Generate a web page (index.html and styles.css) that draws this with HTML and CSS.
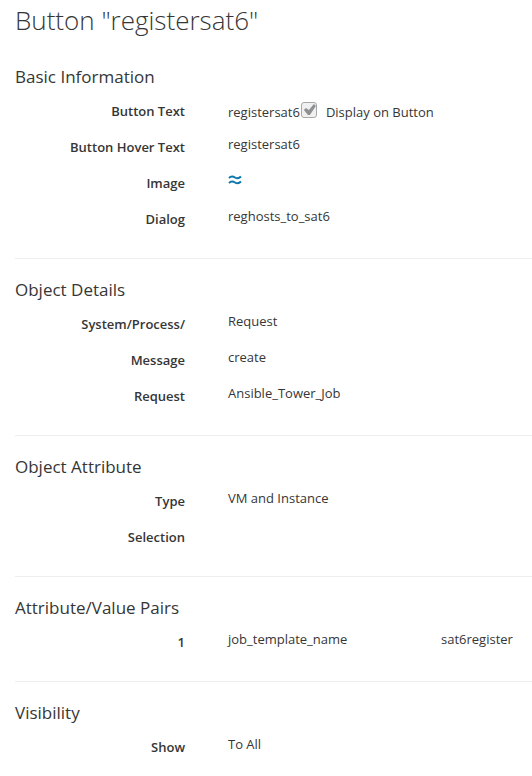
FILE: index.html
```html
<!DOCTYPE html>
<html lang="en">

<head>
    <meta charset="UTF-8">
    <meta name="viewport" content="width=device-width, initial-scale=1.0">
    <title>Button "registersat6"</title>
    <link rel="stylesheet" href="styles.css">
</head>

<body>
    <main>
        <h1>Button "registersat6"</h1>

        <section>
            <h3>Basic Information</h3>
            <div class="form-group">
                <div class="label">Button Text</div>
                <div class="value with-checkbox">
                    registersat6
                    <input type="checkbox" id="display" checked disabled>
                    <label for="display">Display on Button</label>
                </div>
            </div>
            <div class="form-group">
                <div class="label">Button Hover Text</div>
                <div class="value">registersat6</div>
            </div>
            <div class="form-group">
                <div class="label">Image</div>
                <div class="value">
                    <svg class="icon" viewBox="0 0 14 10" width="14" height="10">
                        <path d="M1 3C3 1 4.500 1 7 2.500S11 3.500 13 1.500M1 8C3 6 4.500 6 7 7.500S11 8.500 13 6.500" />
                    </svg>
                </div>
            </div>
            <div class="form-group">
                <div class="label">Dialog</div>
                <div class="value">reghosts_to_sat6</div>
            </div>
        </section>

        <section>
            <h3>Object Details</h3>
            <div class="form-group">
                <div class="label">System/Process/</div>
                <div class="value">Request</div>
            </div>
            <div class="form-group">
                <div class="label">Message</div>
                <div class="value">create</div>
            </div>
            <div class="form-group">
                <div class="label">Request</div>
                <div class="value">Ansible_Tower_Job</div>
            </div>
        </section>

        <section>
            <h3>Object Attribute</h3>
            <div class="form-group">
                <div class="label">Type</div>
                <div class="value">VM and Instance</div>
            </div>
            <div class="form-group">
                <div class="label">Selection</div>
                <div class="value"></div>
            </div>
        </section>

        <section>
            <h3>Attribute/Value Pairs</h3>
            <div class="form-group">
                <div class="label">1</div>
                <div class="value pair">
                    <span>job_template_name</span>
                    <span>sat6register</span>
                </div>
            </div>
        </section>

        <section>
            <h3>Visibility</h3>
            <div class="form-group">
                <div class="label">Show</div>
                <div class="value">To All</div>
            </div>
        </section>
    </main>
</body>

</html>
```
FILE: styles.css
```css
body {
    margin: 0;
    background-color: #fff;
    color: #363636;
    font-family: "Open Sans", Helvetica, Arial, sans-serif;
    font-size: 13px;
    line-height: 20px;
}

main {
    padding: 4px 0 0 15px;
}

h1 {
    margin: 0 0 30px;
    font-size: 26px;
    font-weight: 300;
    line-height: 32px;
}

h3 {
    margin: 0 0 10px;
    font-size: 17px;
    font-weight: 400;
    line-height: 22px;
}

section {
    padding-bottom: 16px;
    margin-bottom: 20px;
    border-bottom: 1px solid #eee;
}

section:last-child {
    margin-bottom: 0;
    padding-bottom: 0;
    border-bottom: none;
}

.form-group {
    display: grid;
    grid-template-columns: 170px 1fr;
    column-gap: 43px;
    min-height: 36px;
}

.label {
    padding-top: 3px;
    font-weight: 600;
    text-align: right;
}

.with-checkbox {
    display: flex;
    padding-top: 4px;
}

input[type="checkbox"] {
    appearance: none;
    box-sizing: border-box;
    width: 16px;
    height: 16px;
    margin: 0 9px 0 1px;
    border: 1px solid #a8a8a8;
    border-radius: 3px;
    background-color: #f0f0f0;
}

input[type="checkbox"]:checked::before {
    content: "";
    display: block;
    height: 14px;
    background-color: #8e9192;
    clip-path: polygon(2px 7px, 4px 5px, 7px 7px, 12px 1px, 14px 3px, 8px 12px, 6px 12px);
}

.icon {
    display: block;
    margin-top: 5px;
    fill: none;
    stroke: #0b77ab;
    stroke-width: 2;
}

.pair {
    display: grid;
    grid-template-columns: 213px 1fr;
}
```
